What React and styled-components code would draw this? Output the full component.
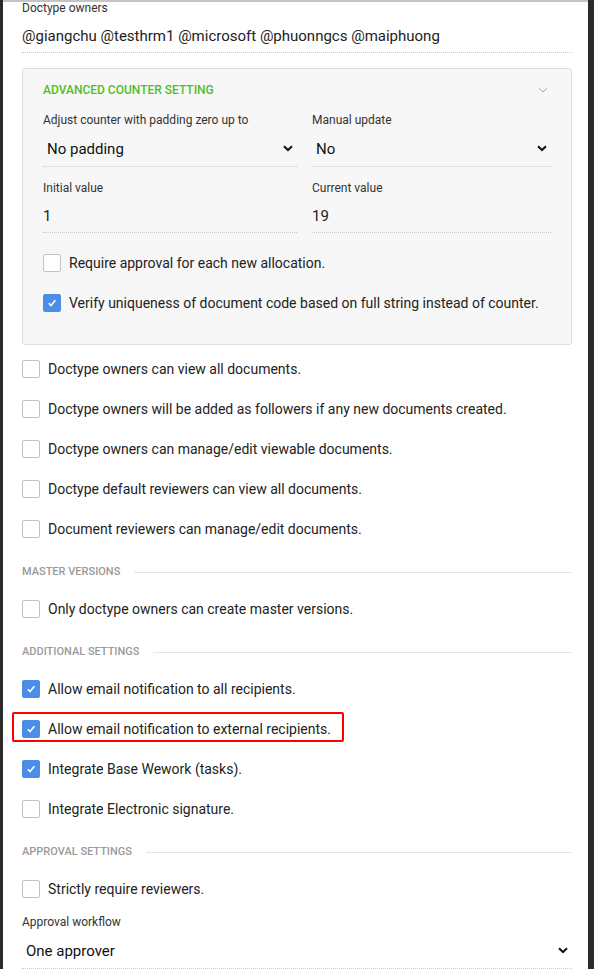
import React from "react"
import styled, { createGlobalStyle } from "styled-components"

const GlobalStyle = createGlobalStyle`
  html, body {
    margin: 0;
    padding: 0;
    background: #2b2b2b;
  }
  body {
    font-family: Roboto, "Liberation Sans", sans-serif;
    color: #222;
  }
`

const Chevron = ({ light }) => (
  <svg width="10" height="7" viewBox="0 0 10 7">
    <path
      d="M1 1.2 L5 5 L9 1.2"
      fill="none"
      stroke={light ? "#aaa" : "#111"}
      strokeWidth={light ? 1 : 2}
    />
  </svg>
)

const Check = () => (
  <svg width="10" height="10" viewBox="0 0 10 10">
    <path d="M1.8 5.2 L4 7.6 L8.4 2.2" fill="none" stroke="#fff" strokeWidth="1.6" />
  </svg>
)

const CheckItem = ({ checked, children }) => (
  <StyledCheckRow>
    <StyledBox checked={checked}>{checked && <Check />}</StyledBox>
    <span>{children}</span>
  </StyledCheckRow>
)

const Select = ({ value }) => (
  <StyledSelect>
    <span>{value}</span>
    <Chevron />
  </StyledSelect>
)

const App = () => {
  return (
    <>
      <GlobalStyle />
      <StyledPanel>
        <StyledLabel>Doctype owners</StyledLabel>
        <StyledOwners>
          @giangchu @testhrm1 @microsoft @phuonngcs @maiphuong
        </StyledOwners>

        <StyledAdvanced>
          <StyledAdvHead>
            <StyledAdvTitle>ADVANCED COUNTER SETTING</StyledAdvTitle>
            <Chevron light />
          </StyledAdvHead>
          <StyledGrid>
            <div>
              <StyledLabel>Adjust counter with padding zero up to</StyledLabel>
              <Select value="No padding" />
            </div>
            <div>
              <StyledLabel>Manual update</StyledLabel>
              <Select value="No" />
            </div>
            <div>
              <StyledLabel>Initial value</StyledLabel>
              <StyledInput>1</StyledInput>
            </div>
            <div>
              <StyledLabel>Current value</StyledLabel>
              <StyledInput>19</StyledInput>
            </div>
          </StyledGrid>
          <StyledInnerList>
            <CheckItem>Require approval for each new allocation.</CheckItem>
            <CheckItem checked>
              Verify uniqueness of document code based on full string instead of counter.
            </CheckItem>
          </StyledInnerList>
        </StyledAdvanced>

        <StyledList first>
          <CheckItem>Doctype owners can view all documents.</CheckItem>
          <CheckItem>
            Doctype owners will be added as followers if any new documents created.
          </CheckItem>
          <CheckItem>Doctype owners can manage/edit viewable documents.</CheckItem>
          <CheckItem>Doctype default reviewers can view all documents.</CheckItem>
          <CheckItem>Document reviewers can manage/edit documents.</CheckItem>
        </StyledList>

        <StyledSection>MASTER VERSIONS</StyledSection>
        <StyledList>
          <CheckItem>Only doctype owners can create master versions.</CheckItem>
        </StyledList>

        <StyledSection>ADDITIONAL SETTINGS</StyledSection>
        <StyledList>
          <CheckItem checked>Allow email notification to all recipients.</CheckItem>
          <StyledHighlight>
            <CheckItem checked>Allow email notification to external recipients.</CheckItem>
          </StyledHighlight>
          <CheckItem checked>Integrate Base Wework (tasks).</CheckItem>
          <CheckItem>Integrate Electronic signature.</CheckItem>
        </StyledList>

        <StyledSection>APPROVAL SETTINGS</StyledSection>
        <StyledList>
          <CheckItem>Strictly require reviewers.</CheckItem>
        </StyledList>
        <StyledLabel spaced>Approval workflow</StyledLabel>
        <Select value="One approver" />
      </StyledPanel>
    </>
  )
}

export default App

const StyledPanel = styled.div`
  margin-left: 3px;
  width: 585px;
  height: 969px;
  box-sizing: border-box;
  background: #fff;
  border-top: 2px solid #c4c4c4;
  padding: 1px 16px 0 19px;
  overflow: hidden;
`

const StyledLabel = styled.div`
  font-size: 12px;
  line-height: 16px;
  font-weight: 400;
  color: #333;
  margin-top: ${props => (props.spaced ? "5px" : "-3px")};
`

const StyledOwners = styled.div`
  margin-top: 10px;
  font-size: 15px;
  line-height: 20px;
  padding-bottom: 6px;
  border-bottom: 1px dotted #c8c8c8;
  color: #222;
`

const StyledAdvanced = styled.div`
  margin-top: 15px;
  background: #f7f7f7;
  border: 1px solid #dedede;
  border-radius: 3px;
  padding: 13px 20px 21px 20px;
`

const StyledAdvHead = styled.div`
  display: flex;
  align-items: center;
  justify-content: space-between;
  padding-right: 3px;
`

const StyledAdvTitle = styled.div`
  font-size: 12px;
  line-height: 16px;
  font-weight: 500;
  color: #4fc01f;
`

const StyledGrid = styled.div`
  display: grid;
  grid-template-columns: 254px 1fr;
  column-gap: 15px;
  row-gap: 13px;
  margin-top: 14px;
  & ${StyledLabel} {
    margin-top: 0;
  }
`

const StyledSelect = styled.div`
  margin-top: 3px;
  height: 36px;
  box-sizing: border-box;
  display: flex;
  align-items: center;
  justify-content: space-between;
  padding: 0 4px;
  border-bottom: 1px dotted #c8c8c8;
  font-size: 15px;
  color: #111;
`

const StyledInput = styled.div`
  margin-top: 3px;
  height: 34px;
  box-sizing: border-box;
  display: flex;
  align-items: center;
  border-bottom: 1px dotted #c8c8c8;
  font-size: 15px;
  color: #222;
`

const StyledInnerList = styled.div`
  margin-top: 10px;
  display: flex;
  flex-direction: column;
`

const StyledList = styled.div`
  display: flex;
  flex-direction: column;
  margin-top: ${props => (props.first ? "4px" : "9px")};
`

const StyledCheckRow = styled.div`
  height: 40px;
  display: flex;
  align-items: center;
  gap: 8px;
  font-size: 14px;
  color: #222;
  white-space: nowrap;
`

const StyledBox = styled.span`
  width: 18px;
  height: 18px;
  box-sizing: border-box;
  border-radius: 2px;
  flex-shrink: 0;
  display: flex;
  align-items: center;
  justify-content: center;
  background: ${props => (props.checked ? "#4a8ee8" : "#fff")};
  border: 1px solid ${props => (props.checked ? "#4a8ee8" : "#c2c2c2")};
`

const StyledHighlight = styled.div`
  position: relative;
  &::after {
    content: "";
    position: absolute;
    left: -10px;
    top: 3px;
    width: 332px;
    height: 30px;
    box-sizing: border-box;
    border: 2px solid #f00;
    border-radius: 2px;
  }
`

const StyledSection = styled.div`
  margin-top: 15px;
  display: flex;
  align-items: center;
  gap: 14px;
  font-size: 11px;
  line-height: 16px;
  font-weight: 500;
  color: #9a9a9a;
  &::after {
    content: "";
    flex: 1;
    height: 1px;
    background: #e3e3e3;
  }
`
